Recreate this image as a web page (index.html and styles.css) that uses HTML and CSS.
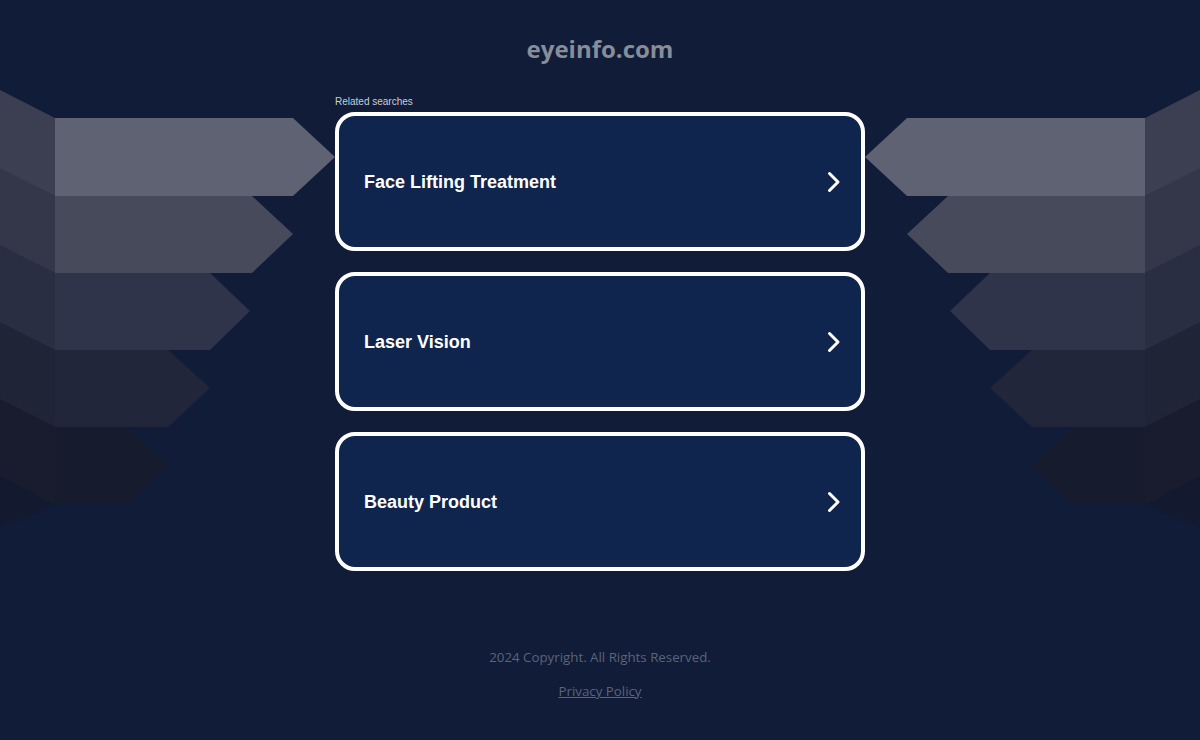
FILE: index.html
```html
<!DOCTYPE html>
<html lang="en">
<head>
<meta charset="utf-8">
<title>eyeinfo.com</title>
<link rel="stylesheet" href="styles.css">
</head>
<body>
<div class="decor" aria-hidden="true">
  <svg width="1200" height="740" viewBox="0 0 1200 740">
    <g>
      <polygon points="0,90 55,118 55,196 0,170" fill="#3c3f51"/>
      <polygon points="0,168 55,196 55,273 0,247" fill="#333749"/>
      <polygon points="0,245 55,273 55,350 0,324" fill="#2a2e42"/>
      <polygon points="0,322 55,350 55,427 0,401" fill="#202437"/>
      <polygon points="0,399 55,427 55,505 0,478" fill="#181c2e"/>
      <polygon points="0,476 55,505 0,528" fill="#131a30"/>
      <polygon points="55,118 293,118 335,157 293,196 55,196" fill="#5f6272"/>
      <polygon points="55,196 252,196 293,234 252,273 55,273" fill="#474a5b"/>
      <polygon points="55,273 210,273 250,311 210,350 55,350" fill="#30344a"/>
      <polygon points="55,350 168,350 210,388 168,427 55,427" fill="#22263a"/>
      <polygon points="55,427 128,427 168,465 128,504 55,504" fill="#161b2d"/>
    </g>
    <g transform="translate(1200,0) scale(-1,1)">
      <polygon points="0,90 55,118 55,196 0,170" fill="#3c3f51"/>
      <polygon points="0,168 55,196 55,273 0,247" fill="#333749"/>
      <polygon points="0,245 55,273 55,350 0,324" fill="#2a2e42"/>
      <polygon points="0,322 55,350 55,427 0,401" fill="#202437"/>
      <polygon points="0,399 55,427 55,505 0,478" fill="#181c2e"/>
      <polygon points="0,476 55,505 0,528" fill="#131a30"/>
      <polygon points="55,118 293,118 335,157 293,196 55,196" fill="#5f6272"/>
      <polygon points="55,196 252,196 293,234 252,273 55,273" fill="#474a5b"/>
      <polygon points="55,273 210,273 250,311 210,350 55,350" fill="#30344a"/>
      <polygon points="55,350 168,350 210,388 168,427 55,427" fill="#22263a"/>
      <polygon points="55,427 128,427 168,465 128,504 55,504" fill="#161b2d"/>
    </g>
  </svg>
</div>
<div class="page">
  <header class="header">
    <h1 class="domain">eyeinfo.com</h1>
  </header>
  <main class="content">
    <div class="label">Related searches</div>
    <div class="cards">
      <a class="card" href="#">
        <span class="card-text">Face Lifting Treatment</span>
        <svg class="chev" width="14" height="22" viewBox="0 0 14 22"><polyline points="2.5,2.5 11,11 2.5,19.5" fill="none" stroke="#fff" stroke-width="3" stroke-linecap="round" stroke-linejoin="round"/></svg>
      </a>
      <a class="card" href="#">
        <span class="card-text">Laser Vision</span>
        <svg class="chev" width="14" height="22" viewBox="0 0 14 22"><polyline points="2.5,2.5 11,11 2.5,19.5" fill="none" stroke="#fff" stroke-width="3" stroke-linecap="round" stroke-linejoin="round"/></svg>
      </a>
      <a class="card" href="#">
        <span class="card-text">Beauty Product</span>
        <svg class="chev" width="14" height="22" viewBox="0 0 14 22"><polyline points="2.5,2.5 11,11 2.5,19.5" fill="none" stroke="#fff" stroke-width="3" stroke-linecap="round" stroke-linejoin="round"/></svg>
      </a>
    </div>
  </main>
  <footer class="footer">
    <div class="copy">2024 Copyright. All Rights Reserved.</div>
    <a class="privacy" href="#">Privacy Policy</a>
  </footer>
</div>
</body>
</html>
```
FILE: styles.css
```css
html, body {
  margin: 0;
  padding: 0;
}
body {
  background: #101c38;
  width: 1200px;
  height: 740px;
  overflow: hidden;
  position: relative;
  font-family: "Open Sans", "Liberation Sans", sans-serif;
}
.decor {
  position: absolute;
  left: 0;
  top: 0;
  width: 1200px;
  height: 740px;
  z-index: 0;
}
.decor svg {
  display: block;
}
.page {
  position: relative;
  z-index: 1;
  display: flex;
  flex-direction: column;
  align-items: center;
}
.header {
  padding-top: 32px;
  height: 62px;
  box-sizing: border-box;
}
.domain {
  margin: 0;
  font-family: "Open Sans", sans-serif;
  font-weight: 700;
  font-size: 24px;
  line-height: 34px;
  color: #878d9a;
}
.content {
  width: 530px;
  margin-top: 34px;
}
.label {
  font-family: "Liberation Sans", Arial, sans-serif;
  font-size: 10px;
  line-height: 12px;
  color: #c9cdd6;
  height: 16px;
}
.cards {
  display: flex;
  flex-direction: column;
  gap: 21px;
}
.card {
  box-sizing: border-box;
  height: 139px;
  border: 4px solid #ffffff;
  border-radius: 20px;
  background: #10254e;
  display: flex;
  align-items: center;
  justify-content: space-between;
  padding: 2px 20px 0 25px;
  text-decoration: none;
}
.card-text {
  font-family: "Liberation Sans", Arial, sans-serif;
  font-weight: 700;
  font-size: 18px;
  color: #ffffff;
}
.chev {
  display: block;
  margin-top: -2px;
}
.footer {
  margin-top: 76px;
  display: flex;
  flex-direction: column;
  align-items: center;
  gap: 14px;
}
.copy {
  font-size: 13.3px;
  line-height: 20px;
  color: #5b6479;
}
.privacy {
  font-size: 13.3px;
  line-height: 20px;
  color: #5b6479;
  text-decoration: underline;
}
```
